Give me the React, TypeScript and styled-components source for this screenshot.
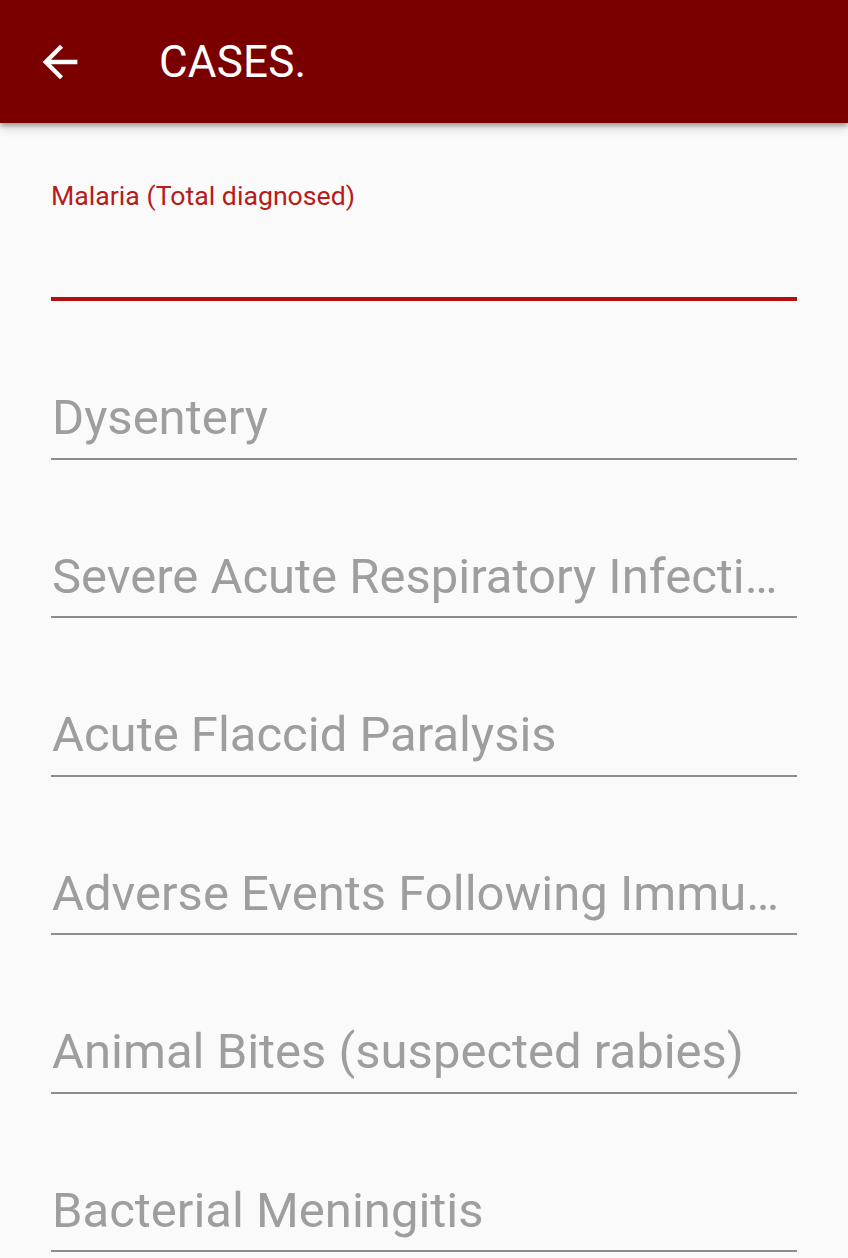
import * as React from 'react';
import styled, { createGlobalStyle } from 'styled-components';

const GlobalStyle = createGlobalStyle`
  html, body {
    margin: 0;
    padding: 0;
    background: #fafafa;
    font-family: Roboto, 'Noto Sans', sans-serif;
    overflow: hidden;
  }
  * {
    box-sizing: border-box;
  }
`;

const Screen = styled.div`
  width: 848px;
  height: 1258px;
  background: #fafafa;
  overflow: hidden;
  display: flex;
  flex-direction: column;
`;

const AppBar = styled.header`
  height: 123px;
  flex-shrink: 0;
  background: #7a0000;
  display: flex;
  align-items: center;
  padding-left: 34px;
  box-shadow: 0 3px 4px rgba(0, 0, 0, 0.28), 0 6px 10px rgba(0, 0, 0, 0.12);
  position: relative;
  z-index: 1;
`;

const BackButton = styled.button`
  width: 52px;
  height: 52px;
  padding: 0;
  border: none;
  background: transparent;
  display: flex;
  color: #ffffff;
  svg {
    display: block;
  }
`;

const Title = styled.h1`
  margin: 0 0 0 73px;
  font-size: 44px;
  font-weight: 400;
  color: #ffffff;
  letter-spacing: 0.2px;
`;

const Form = styled.form`
  padding: 19.5px 51px 0 51px;
  display: flex;
  flex-direction: column;
`;

const Field = styled.div<{ $active?: boolean }>`
  height: 158.5px;
  flex-shrink: 0;
  display: flex;
  flex-direction: column;
  justify-content: ${({ $active }) => ($active ? 'space-between' : 'flex-end')};
  border-bottom: ${({ $active }) => ($active ? '4px solid #b30f0f' : '2.5px solid #8c8c8c')};
  padding-top: ${({ $active }) => ($active ? '38px' : '0')};
`;

const Label = styled.label`
  font-size: 26.7px;
  line-height: 30px;
  color: #b71c1c;
`;

const Input = styled.input`
  width: 100%;
  border: none;
  outline: none;
  background: transparent;
  padding: 0 0 11px 1px;
  margin: 0;
  font-family: Roboto, 'Noto Sans', sans-serif;
  font-size: 49px;
  line-height: 58px;
  height: 69px;
  color: #212121;
  text-overflow: ellipsis;
  white-space: nowrap;
  &::placeholder {
    color: #9e9e9e;
    opacity: 1;
  }
`;

const fields = [
  'Dysentery',
  'Severe Acute Respiratory Infection',
  'Acute Flaccid Paralysis',
  'Adverse Events Following Immunization',
  'Animal Bites (suspected rabies)',
  'Bacterial Meningitis',
];

const ArrowBack = () => (
  <svg width="52" height="52" viewBox="0 0 24 24" fill="currentColor">
    <path d="M20 11H7.83l5.59-5.59L12 4l-8 8 8 8 1.41-1.41L7.83 13H20v-2z" />
  </svg>
);

const App: React.FC = () => {
  return (
    <Screen>
      <GlobalStyle />
      <AppBar>
        <BackButton type="button" aria-label="Back">
          <ArrowBack />
        </BackButton>
        <Title>CASES.</Title>
      </AppBar>
      <Form>
        <Field $active>
          <Label htmlFor="malaria">Malaria (Total diagnosed)</Label>
          <Input id="malaria" type="text" />
        </Field>
        {fields.map((name) => (
          <Field key={name}>
            <Input type="text" placeholder={name} />
          </Field>
        ))}
      </Form>
    </Screen>
  );
};

export default App;
